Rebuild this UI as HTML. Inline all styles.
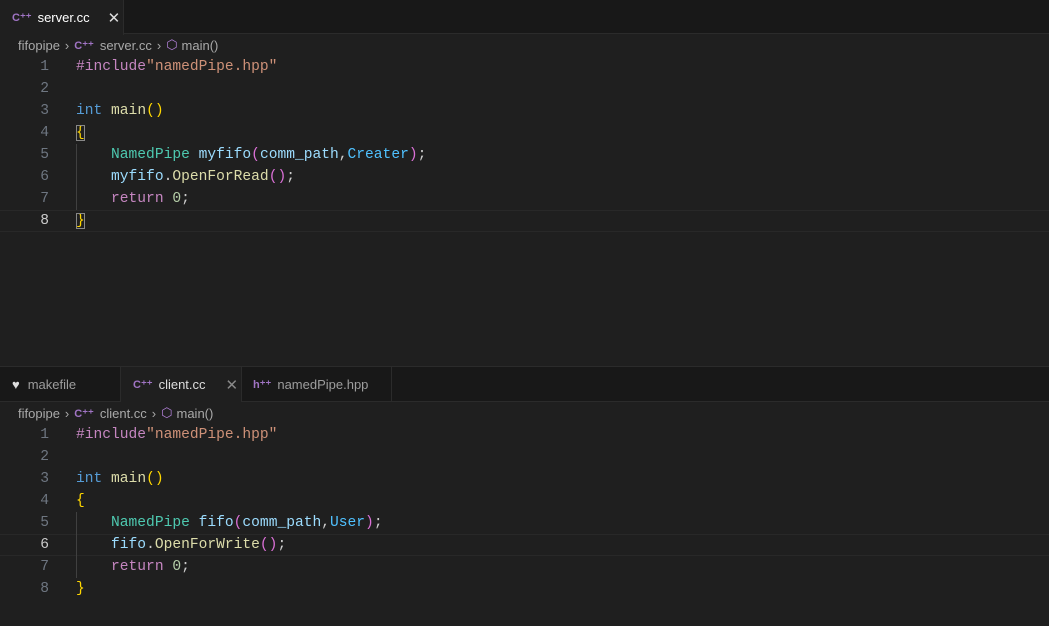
<!DOCTYPE html>
<html><head><meta charset="utf-8"><style>
*{margin:0;padding:0;box-sizing:border-box}
body{width:1049px;height:626px;background:#1f1f1f;overflow:hidden;font-family:"Liberation Sans",sans-serif;position:relative}
.tabbar{position:absolute;left:0;width:1049px;height:34px;background:#181818;border-bottom:1px solid #2b2b2b}
.tab{position:absolute;top:0;height:34px;display:flex;align-items:center;font-size:13px;color:#9d9d9d;border-right:1px solid #2b2b2b;background:#181818}
.tab.act{background:#1f1f1f;color:#fff;border-bottom:none;height:35px}
.ic{color:#a074c4;font-size:11px;font-weight:bold;margin-right:6px}
.bc{position:absolute;left:18px;height:22px;display:flex;align-items:center;font-size:13px;color:#a9a9a9}
.bc .s{margin:0 5px;color:#a9a9a9}
.code{position:absolute;left:0;width:1049px;font-family:"Liberation Mono",monospace;font-size:14.6px}
.ln{height:22px;line-height:22px;position:relative;white-space:pre;color:#cccccc}
.ln .n{position:absolute;right:1000px;width:40px;text-align:right;color:#6e7681}
.ln .n.c{color:#cccccc}
.ln .t{position:absolute;left:76px}
.cur{box-shadow:inset 0 1px 0 #282828,inset 0 -1px 0 #282828}
.kw{color:#c586c0}.st{color:#ce9178}.ty{color:#569cd6}.fn{color:#dcdcaa}.y{color:#ffd700}.cl{color:#4ec9b0}.v{color:#9cdcfe}.en{color:#4fc1ff}.p{color:#da70d6}.num{color:#b5cea8}
.bx{outline:1px solid #888;outline-offset:-1px}
.guide{position:absolute;left:76px;width:1px;background:#404040}
</style></head><body>
<div class="tabbar" style="top:0">
 <div class="tab act" style="left:0;width:124px;padding-left:12px"><span class="ic">C⁺⁺</span>server.cc<span style="margin-left:18px;font-size:15px;color:#ddd">✕</span></div>
</div>
<div class="bc" style="top:34px">fifopipe<span class="s">›</span><span class="ic" style="margin-right:6px">C⁺⁺</span>server.cc<span class="s">›</span><span style="color:#b180d7;margin-right:4px">⬡</span>main()</div>
<div class="code" style="top:56px">
<div class="ln"><span class="n">1</span><span class="t"><span class="kw">#include</span><span class="st">"namedPipe.hpp"</span></span></div>
<div class="ln"><span class="n">2</span></div>
<div class="ln"><span class="n">3</span><span class="t"><span class="ty">int</span> <span class="fn">main</span><span class="y">()</span></span></div>
<div class="ln"><span class="n">4</span><span class="t"><span class="y bx">{</span></span></div>
<div class="ln"><span class="n">5</span><span class="t">    <span class="cl">NamedPipe</span> <span class="v">myfifo</span><span class="p">(</span><span class="v">comm_path</span>,<span class="en">Creater</span><span class="p">)</span>;</span></div>
<div class="ln"><span class="n">6</span><span class="t">    <span class="v">myfifo</span>.<span class="fn">OpenForRead</span><span class="p">()</span>;</span></div>
<div class="ln"><span class="n">7</span><span class="t">    <span class="kw">return</span> <span class="num">0</span>;</span></div>
<div class="ln cur"><span class="n c">8</span><span class="t"><span class="y bx">}</span></span></div>
</div>
<div class="guide" style="top:144px;height:66px"></div>
<div style="position:absolute;top:366px;left:0;width:1049px;height:1px;background:#2b2b2b"></div>
<div class="tabbar" style="top:367px;height:35px">
 <div class="tab" style="left:0;width:121px;padding-left:12px"><span style="color:#ddd;margin-right:8px">♥</span>makefile</div>
 <div class="tab act" style="left:121px;width:121px;padding-left:12px;color:#ddd"><span class="ic">C⁺⁺</span>client.cc<span style="margin-left:20px;font-size:15px;color:#888">✕</span></div>
 <div class="tab" style="left:242px;width:150px;padding-left:11px"><span class="ic">h⁺⁺</span>namedPipe.hpp</div>
</div>
<div class="bc" style="top:402px">fifopipe<span class="s">›</span><span class="ic" style="margin-right:6px">C⁺⁺</span>client.cc<span class="s">›</span><span style="color:#b180d7;margin-right:4px">⬡</span>main()</div>
<div class="code" style="top:424px">
<div class="ln"><span class="n">1</span><span class="t"><span class="kw">#include</span><span class="st">"namedPipe.hpp"</span></span></div>
<div class="ln"><span class="n">2</span></div>
<div class="ln"><span class="n">3</span><span class="t"><span class="ty">int</span> <span class="fn">main</span><span class="y">()</span></span></div>
<div class="ln"><span class="n">4</span><span class="t"><span class="y">{</span></span></div>
<div class="ln"><span class="n">5</span><span class="t">    <span class="cl">NamedPipe</span> <span class="v">fifo</span><span class="p">(</span><span class="v">comm_path</span>,<span class="en">User</span><span class="p">)</span>;</span></div>
<div class="ln cur"><span class="n c">6</span><span class="t">    <span class="v">fifo</span>.<span class="fn">OpenForWrite</span><span class="p">()</span>;</span></div>
<div class="ln"><span class="n">7</span><span class="t">    <span class="kw">return</span> <span class="num">0</span>;</span></div>
<div class="ln"><span class="n">8</span><span class="t"><span class="y">}</span></span></div>
</div>
<div class="guide" style="top:512px;height:66px"></div>
</body></html>
